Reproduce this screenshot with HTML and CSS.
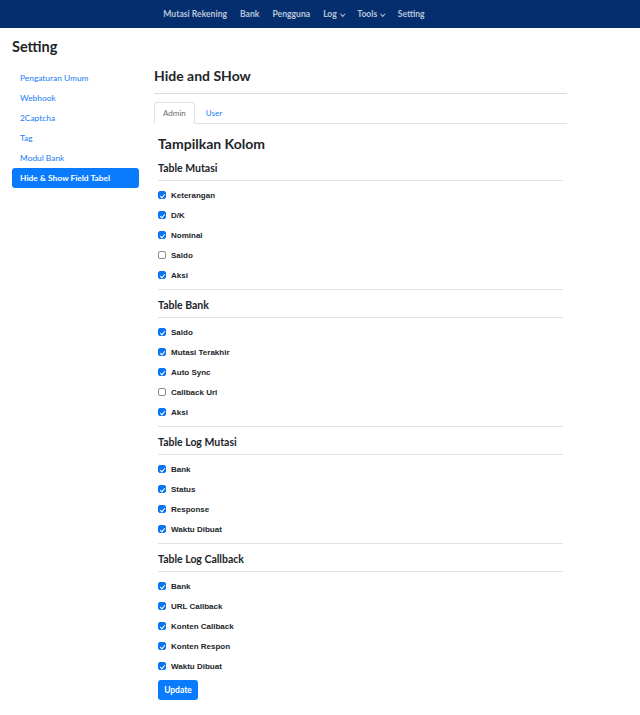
FILE: index.html
```html
<!DOCTYPE html>
<html>
<head>
<meta charset="utf-8">
<link rel="stylesheet" href="styles.css">
</head>
<body>
<nav class="topbar">
  <a class="nav-link">Mutasi Rekening</a>
  <a class="nav-link">Bank</a>
  <a class="nav-link">Pengguna</a>
  <a class="nav-link">Log <span class="caret"></span></a>
  <a class="nav-link">Tools <span class="caret"></span></a>
  <a class="nav-link">Setting</a>
</nav>
<h1 class="page-title">Setting</h1>
<div class="layout">
  <aside class="sidebar">
    <a class="side-link">Pengaturan Umum</a>
    <a class="side-link">Webhook</a>
    <a class="side-link">2Captcha</a>
    <a class="side-link">Tag</a>
    <a class="side-link">Modul Bank</a>
    <a class="side-link active">Hide &amp; Show Field Tabel</a>
  </aside>
  <main class="content">
    <h2 class="content-title">Hide and SHow</h2>
    <div class="tabs">
      <span class="tab active">Admin</span>
      <span class="tab">User</span>
    </div>
    <div class="panel">
      <h3 class="panel-title">Tampilkan Kolom</h3>

      <section class="group">
        <h4 class="group-title">Table Mutasi</h4>
        <label class="check"><span class="box on"></span>Keterangan</label>
        <label class="check"><span class="box on"></span>D/K</label>
        <label class="check"><span class="box on"></span>Nominal</label>
        <label class="check"><span class="box"></span>Saldo</label>
        <label class="check"><span class="box on"></span>Aksi</label>
      </section>

      <section class="group">
        <h4 class="group-title">Table Bank</h4>
        <label class="check"><span class="box on"></span>Saldo</label>
        <label class="check"><span class="box on"></span>Mutasi Terakhir</label>
        <label class="check"><span class="box on"></span>Auto Sync</label>
        <label class="check"><span class="box"></span>Callback Url</label>
        <label class="check"><span class="box on"></span>Aksi</label>
      </section>

      <section class="group">
        <h4 class="group-title">Table Log Mutasi</h4>
        <label class="check"><span class="box on"></span>Bank</label>
        <label class="check"><span class="box on"></span>Status</label>
        <label class="check"><span class="box on"></span>Response</label>
        <label class="check"><span class="box on"></span>Waktu Dibuat</label>
      </section>

      <section class="group last">
        <h4 class="group-title">Table Log Callback</h4>
        <label class="check"><span class="box on"></span>Bank</label>
        <label class="check"><span class="box on"></span>URL Callback</label>
        <label class="check"><span class="box on"></span>Konten Callback</label>
        <label class="check"><span class="box on"></span>Konten Respon</label>
        <label class="check"><span class="box on"></span>Waktu Dibuat</label>
      </section>

      <button class="btn">Update</button>
    </div>
  </main>
</div>
</body>
</html>
```
FILE: styles.css
```css
* { box-sizing: border-box; }
html, body { margin: 0; padding: 0; background: #fff; }
body {
  font-family: "Lato", "Noto Sans", sans-serif;
  color: #212529;
  width: 640px;
}
.topbar {
  height: 28px;
  background: #042e6e;
  display: flex;
  align-items: center;
  justify-content: center;
  padding-right: 52px;
}
.nav-link {
  color: #b9c6da;
  font-weight: 700;
  font-size: 8.6px;
  padding: 0 6.5px;
  display: inline-flex;
  align-items: center;
}
.caret {
  display: inline-block;
  width: 3.5px;
  height: 3.5px;
  border-right: 1.2px solid #b9c6da;
  border-bottom: 1.2px solid #b9c6da;
  transform: rotate(45deg);
  margin-left: 4px;
  margin-top: -1px;
}
.page-title {
  margin: 0;
  padding: 10px 12px 0;
  height: 38px;
  font-size: 14.5px;
  font-weight: 700;
  line-height: 17px;
  color: #212529;
}
.layout {
  display: flex;
  padding-left: 12px;
}
.sidebar {
  width: 127px;
  display: flex;
  flex-direction: column;
  padding-top: 2px;
}
.side-link {
  display: block;
  height: 20px;
  line-height: 20px;
  padding-left: 8px;
  font-size: 8.4px;
  color: #1a7cf5;
  border-radius: 3px;
}
.side-link.active {
  background: #0b7bfd;
  color: #fff;
  font-weight: 700;
}
.content {
  width: 413px;
  margin-left: 15px;
}
.content-title {
  margin: 0;
  font-size: 14px;
  font-weight: 700;
  line-height: 18px;
  padding-top: 1px;
  padding-bottom: 8px;
  border-bottom: 1px solid #dcdcdc;
}
.tabs {
  margin-top: 8px;
  display: flex;
  border-bottom: 1px solid #dee2e6;
  height: 22px;
}
.tab {
  font-size: 8px;
  line-height: 20px;
  padding: 0 8px;
  color: #1a7cf5;
  border: 1px solid transparent;
  border-radius: 3px 3px 0 0;
}
.tab.active {
  color: #6c6c6c;
  border-color: #dee2e6 #dee2e6 #fff;
  margin-bottom: -1px;
  height: 22px;
  margin-right: 2px;
}
.panel {
  padding: 0 4px;
}
.panel-title {
  margin: 0;
  padding-top: 11px;
  font-size: 14px;
  font-weight: 700;
  line-height: 18px;
}
.group {
  border-bottom: 1px solid #e1e1e1;
  padding-bottom: 4px;
}
.group.last { border-bottom: none; padding-bottom: 4px; }
.group-title {
  margin: 0;
  padding-top: 9px;
  padding-bottom: 5px;
  font-size: 10.5px;
  font-weight: 700;
  line-height: 13px;
  border-bottom: 1px solid #e1e1e1;
  margin-bottom: 4px;
}
.check {
  display: flex;
  align-items: center;
  height: 20px;
  font-family: "Liberation Sans", sans-serif;
  font-size: 8px;
  font-weight: 700;
  color: #212529;
}
.box {
  width: 8px;
  height: 8px;
  border: 1px solid #8a8a8a;
  border-radius: 2px;
  margin-right: 5px;
  background: #fff;
  position: relative;
}
.box.on {
  background: #0b75f0;
  border-color: #0b75f0;
}
.box.on::after {
  content: "";
  position: absolute;
  left: 2px;
  top: 0.5px;
  width: 2px;
  height: 4px;
  border-right: 1px solid #fff;
  border-bottom: 1px solid #fff;
  transform: rotate(40deg);
}
.btn {
  display: block;
  background: #0b7bfd;
  color: #fff;
  border: none;
  border-radius: 3px;
  font-family: "Lato", sans-serif;
  font-size: 8.5px;
  font-weight: 700;
  width: 40px;
  height: 20px;
  padding: 0;
}
```
